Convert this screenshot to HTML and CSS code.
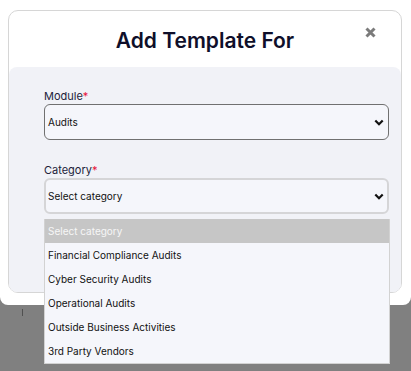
FILE: index.html
```html
<!DOCTYPE html>
<html>
<head>
<link rel="stylesheet" href="styles.css">
<meta charset="UTF-8">
<title>Add Template For</title>
</head>
<body>
<div class="modal">
  <div class="card">
    <div class="card_head">
      <h3 class="title">Add Template For</h3>
      <svg class="close" width="11" height="11" viewBox="0 0 11 11">
        <path d="M1.5 1.5 L9.5 9.5 M9.5 1.5 L1.5 9.5" stroke="#7b7b7b" stroke-width="3" stroke-linecap="butt"/>
      </svg>
    </div>
    <div class="card_body">
      <div class="field">
        <div class="lbl">Module<span class="req">*</span></div>
        <div class="sel">
          <span>Audits</span>
          <svg class="chev" width="10" height="7" viewBox="0 0 10 7"><path d="M1.3 1.5 L5 5.2 L8.7 1.5" fill="none" stroke="#111" stroke-width="2.2"/></svg>
        </div>
      </div>
      <div class="field">
        <div class="lbl">Category<span class="req">*</span></div>
        <div class="sel sel_open">
          <span>Select category</span>
          <svg class="chev" width="10" height="7" viewBox="0 0 10 7"><path d="M1.3 1.5 L5 5.2 L8.7 1.5" fill="none" stroke="#111" stroke-width="2.2"/></svg>
          <ul class="drop">
            <li class="hl">Select category</li>
            <li>Financial Compliance Audits</li>
            <li>Cyber Security Audits</li>
            <li>Operational Audits</li>
            <li>Outside Business Activities</li>
            <li>3rd Party Vendors</li>
          </ul>
        </div>
      </div>
    </div>
  </div>
</div>
<div class="stray"></div>
</body>
</html>
```

FILE: styles.css
```css
body {
  margin: 0;
  background-color: #808080;
  font-family: Inter, "Liberation Sans", sans-serif;
  height: 371px;
  overflow: hidden;
}
.modal {
  background-color: white;
  padding: 10px 9px 12px 8px;
  border-radius: 0 0 8px 8px;
}
.card {
  border: 1px solid #d6d6d6;
  border-radius: 10px;
  background-color: white;
}
.card_head {
  height: 56px;
  display: flex;
  align-items: center;
  justify-content: center;
  position: relative;
}
.title {
  margin: 0;
  font-size: 21px;
  font-weight: 600;
  color: #0f0f2a;
  padding-top: 2px;
}
.close {
  position: absolute;
  right: 25px;
  top: 16px;
}
.card_body {
  background-color: #f1f2f7;
  border-radius: 8px;
  padding: 22px 12px 78px 35px;
  display: flex;
  flex-direction: column;
  gap: 23px;
}
.lbl {
  font-size: 11px;
  line-height: 15px;
  color: #22223a;
}
.req {
  color: #e8133a;
}
.sel {
  height: 34px;
  border: 1px solid #707070;
  border-radius: 6px;
  background-color: #f5f6fb;
  display: flex;
  align-items: center;
  justify-content: space-between;
  padding: 0 4px 0 3px;
  font-size: 10px;
  color: #111;
  position: relative;
}
.sel_open {
  height: 32px;
  border: 2px solid #d5d5d7;
  padding: 0 3px 0 2px;
}
.drop {
  position: absolute;
  left: -2px;
  right: -3px;
  top: 39px;
  margin: 0;
  padding: 0;
  list-style: none;
  background-color: #f5f6fb;
  border: 1px solid #d2d2d2;
  border-top: none;
}
.drop li {
  height: 24px;
  line-height: 24px;
  padding-left: 3px;
  font-size: 10px;
  color: #111;
}
.drop .hl {
  background-color: #c6c6c6;
  color: #f6f6f6;
}
.stray {
  position: absolute;
  left: 22px;
  top: 309px;
  width: 1px;
  height: 7px;
  background-color: #505050;
}
```
